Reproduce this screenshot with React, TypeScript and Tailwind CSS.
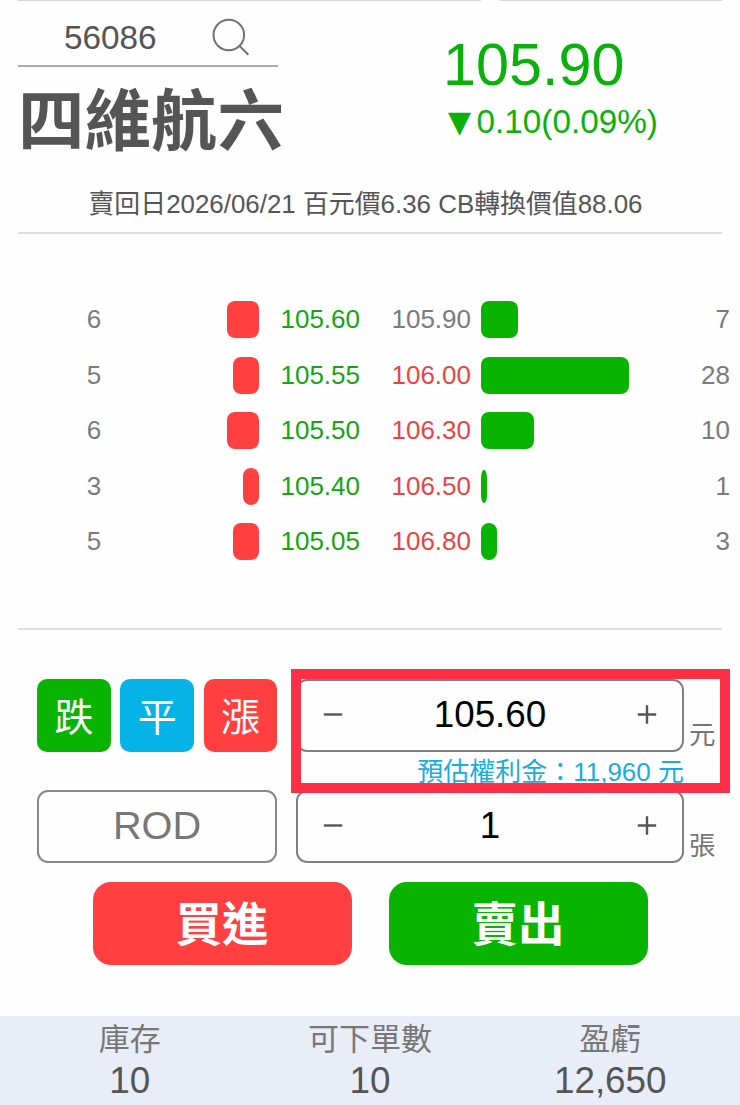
import React, { useState } from 'react';

type Level = {
    qty: number;
    price: string;
    width: number;
    color: string;
};

const bids: Level[] = [
    { qty: 6, price: '105.60', width: 32, color: 'text-[#14a514]' },
    { qty: 5, price: '105.55', width: 26.5, color: 'text-[#14a514]' },
    { qty: 6, price: '105.50', width: 32, color: 'text-[#14a514]' },
    { qty: 3, price: '105.40', width: 16, color: 'text-[#14a514]' },
    { qty: 5, price: '105.05', width: 26.5, color: 'text-[#14a514]' },
];

const asks: Level[] = [
    { qty: 7, price: '105.90', width: 37, color: 'text-[#7b7b7b]' },
    { qty: 28, price: '106.00', width: 148, color: 'text-[#e84545]' },
    { qty: 10, price: '106.30', width: 53, color: 'text-[#e84545]' },
    { qty: 1, price: '106.50', width: 5.5, color: 'text-[#e84545]' },
    { qty: 3, price: '106.80', width: 16, color: 'text-[#e84545]' },
];

const summary = [
    { label: '庫存', value: '10' },
    { label: '可下單數', value: '10' },
    { label: '盈虧', value: '12,650' },
];

const SearchIcon: React.FC = () => (
    <svg className="w-10 h-10" viewBox="0 0 40 40" fill="none" stroke="#707070" strokeWidth="2">
        <circle cx="17.8" cy="18" r="15.3" />
        <path d="M28.2 28.6 L37.4 37.8" />
    </svg>
);

type StepperProps = {
    value: string;
    onMinus: () => void;
    onPlus: () => void;
};

const Stepper: React.FC<StepperProps> = ({ value, onMinus, onPlus }) => (
    <div className="w-[388px] h-[73.5px] border-2 border-[#808080] rounded-[11px] flex items-center justify-between pl-[25px] pr-[25px]">
        <button onClick={onMinus} aria-label="minus">
            <svg className="w-5 h-5" viewBox="0 0 20 20" stroke="#555" strokeWidth="2.4">
                <path d="M0.8 9.5 H19.2" />
            </svg>
        </button>
        <span className="text-[36.8px] leading-none text-black">{value}</span>
        <button onClick={onPlus} aria-label="plus">
            <svg className="w-5 h-5" viewBox="0 0 20 20" stroke="#555" strokeWidth="2.4">
                <path d="M0.8 9.5 H19.2 M10 0.3 V18.7" />
            </svg>
        </button>
    </div>
);

const App: React.FC = () => {
    const [price, setPrice] = useState(105.6);
    const [lots, setLots] = useState(1);

    return (
        <div className="w-[740px] h-[1105px] bg-[#fefefe] overflow-hidden flex flex-col font-['Liberation_Sans','Noto_Sans_CJK_TC',sans-serif] text-[#555]">
            <div className="flex ml-[18px] gap-[19px] h-px shrink-0">
                <div className="w-[463px] bg-[#d8d8d8]"></div>
                <div className="w-[222px] bg-[#d8d8d8]"></div>
            </div>

            <div className="mx-[18px] h-[233px] border-b-2 border-[#dedede] shrink-0">
                <div className="flex h-[175px]">
                    <div className="w-[430px]">
                        <div className="w-[260px] h-[66px] border-b-2 border-[#aaa] flex items-start pl-[46px]">
                            <span className="text-[33.3px] leading-[74px] w-[147px]">56086</span>
                            <div className="pt-4">
                                <SearchIcon />
                            </div>
                        </div>
                        <h1 className="text-[66.5px] leading-[110px] font-bold">四維航六</h1>
                    </div>
                    <div className="text-[#0bb10b] pt-[33px]">
                        <div className="text-[59.3px] leading-[62px] -ml-[5px]">105.90</div>
                        <div className="text-[33.3px] leading-[51px] flex items-center">
                            <span className="font-['DejaVu_Sans'] text-[30px] w-[28.5px] -mt-px">▼</span>
                            <span>0.10(0.09%)</span>
                        </div>
                    </div>
                </div>
                <div className="text-[25.9px] leading-[57px] text-center -ml-[9px] whitespace-nowrap">
                    賣回日2026/06/21 百元價6.36 CB轉換價值88.06
                </div>
            </div>

            <div className="flex ml-[18px] w-[704px] h-[396px] border-b-2 border-[#dedede] pt-[58px] text-[26px] shrink-0">
                <div className="w-[342px] shrink-0">
                    {bids.map((row) => (
                        <div key={row.price} className="flex items-center h-[55.5px]">
                            <span className="w-[152px] text-center text-[#7b7b7b]">{row.qty}</span>
                            <div className="w-[89px] flex justify-end">
                                <div className="h-[37px] rounded-[8px] bg-[#ff3f40]" style={{ width: row.width }}></div>
                            </div>
                            <span className={`flex-1 text-right ${row.color}`}>{row.price}</span>
                        </div>
                    ))}
                </div>
                <div className="w-[370px] shrink-0">
                    {asks.map((row) => (
                        <div key={row.price} className="flex items-center h-[55.5px]">
                            <span className={`w-[111px] text-right ${row.color}`}>{row.price}</span>
                            <div
                                className={`ml-[10px] bg-[#08b400] ${row.qty > 1 ? 'h-[37px] rounded-[8px]' : 'h-[33px] rounded-[50%/25%]'}`}
                                style={{ width: row.width }}
                            ></div>
                            <span className="flex-1 text-right text-[#7b7b7b]">{row.qty}</span>
                        </div>
                    ))}
                </div>
            </div>

            <div className="relative pt-[48.5px] pl-[37px] h-[386px] shrink-0">
                <div className="flex">
                    <div className="w-[259px] flex gap-[9.5px] text-white text-[39px] leading-[73px]">
                        <button className="w-[73.8px] h-[73.5px] pt-0.5 rounded-[10px] bg-[#08b400]">跌</button>
                        <button className="w-[73.8px] h-[73.5px] pt-0.5 rounded-[10px] bg-[#05b3e6]">平</button>
                        <button className="w-[73.8px] h-[73.5px] pt-0.5 rounded-[10px] bg-[#ff3f40]">漲</button>
                    </div>
                    <Stepper
                        value={price.toFixed(2)}
                        onMinus={() => setPrice(price - 0.05)}
                        onPlus={() => setPrice(price + 0.05)}
                    />
                    <span className="text-[26.5px] leading-none text-[#777] self-end pl-[5px] pb-1">元</span>
                </div>
                <div className="w-[647px] h-[37.5px] text-right text-[26px] leading-[40px] text-[#1aacdb]">
                    預估權利金：11,960 元
                </div>
                <div className="flex">
                    <div className="w-[259px]">
                        <button className="w-[240px] h-[73.5px] border-2 border-[#888] rounded-[11px] text-[39.7px] text-[#777]">
                            ROD
                        </button>
                    </div>
                    <Stepper
                        value={String(lots)}
                        onMinus={() => setLots(lots - 1)}
                        onPlus={() => setLots(lots + 1)}
                    />
                    <span className="text-[26.5px] leading-none text-[#777] self-end pl-[5px] pb-1">張</span>
                </div>
                <div className="flex gap-[37px] pl-[55.5px] pt-[18.5px] text-white text-[46.5px] leading-[82px] font-bold">
                    <button className="w-[259px] h-[83px] pt-0.5 rounded-[18px] bg-[#ff3f40]">買進</button>
                    <button className="w-[259px] h-[83px] pt-0.5 rounded-[18px] bg-[#08b400]">賣出</button>
                </div>
                {/* highlight frame over the price field */}
                <div className="absolute left-[291px] top-[39px] w-[438.5px] h-[124px] border-[10px] border-[#ff3045] pointer-events-none"></div>
            </div>

            <div className="flex-1 bg-[#e8edf7] flex pl-[9.5px]">
                {summary.map((item) => (
                    <div key={item.label} className="w-[240.3px] text-center">
                        <div className="text-[31px] leading-[48px] text-[#777]">{item.label}</div>
                        <div className="text-[36.8px] leading-[33px]">{item.value}</div>
                    </div>
                ))}
            </div>
        </div>
    );
};

export default App;
